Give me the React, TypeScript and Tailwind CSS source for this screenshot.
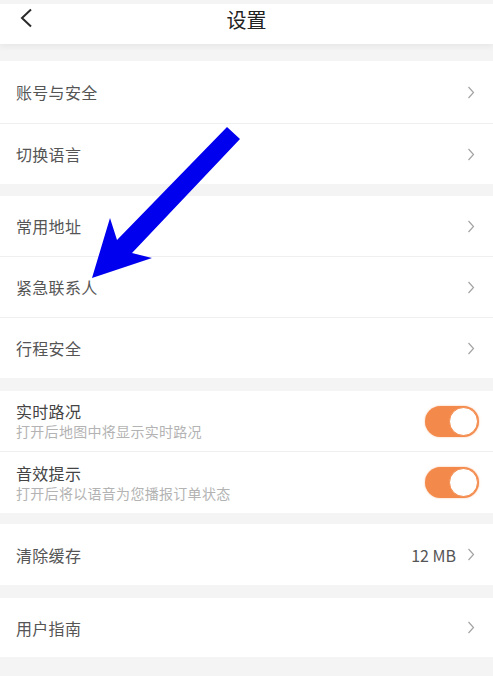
import React from "react";

const font = { fontFamily: '"Noto Sans CJK SC", "Noto Sans", sans-serif' };

function Chevron() {
  return (
    <svg width="8" height="13" viewBox="0 0 8 13" className="shrink-0">
      <path d="M1.5 1 L6.5 6.5 L1.5 12" fill="none" stroke="#a3a3a3" strokeWidth="1.2" />
    </svg>
  );
}

function Toggle() {
  return (
    <div className="w-[54px] h-[31px] rounded-full bg-[#f38a4b] flex items-center justify-end pr-[1px] shadow-[0_0_2px_rgba(243,138,75,0.6)]">
      <div className="w-[29px] h-[29px] rounded-full bg-white border-[1.5px] border-[#f38a4b]" />
    </div>
  );
}

function Row({ label, value, h, top }: { label: string; value?: string; h: string; top?: boolean }) {
  return (
    <div className={`flex items-center justify-between pl-4 pr-[18px] bg-white ${h} ${top ? "border-t border-[#efefef]" : ""}`}>
      <span className="text-[16px] text-[#555555] tracking-[0.3px]">{label}</span>
      <div className="flex items-center gap-[11px]">
        {value && <span className="text-[16px] text-[#555555]">{value}</span>}
        <Chevron />
      </div>
    </div>
  );
}

function SwitchRow({ label, sub, h, top }: { label: string; sub: string; h: string; top?: boolean }) {
  return (
    <div className={`flex items-center justify-between pl-4 pr-[14px] bg-white ${h} ${top ? "border-t border-[#efefef]" : ""}`}>
      <div className="flex flex-col">
        <span className="text-[16px] text-[#444444] leading-[21px] tracking-[0.3px]">{label}</span>
        <span className="text-[14px] text-[#b3b3b3] leading-[19px] tracking-[0.3px]">{sub}</span>
      </div>
      <Toggle />
    </div>
  );
}

export default function App() {
  return (
    <div className="relative w-full h-[676px] bg-[#f4f4f4] overflow-hidden pt-[4px]" style={font}>
      <div className="relative h-[40px] bg-white flex items-center justify-center pb-[9px] shadow-[0_3px_6px_rgba(0,0,0,0.05)]">
        <svg width="14" height="20" viewBox="0 0 14 20" className="absolute left-[19px] top-[4px]">
          <path d="M12 1.5 L3 10 L12 18.5" fill="none" stroke="#2a2a2a" strokeWidth="2" />
        </svg>
        <span className="text-[20px] text-[#222222] leading-[24px]">设置</span>
      </div>

      <div className="mt-[17px]">
        <Row label="账号与安全" h="h-[62px]" />
        <Row label="切换语言" h="h-[61px]" top />
      </div>

      <div className="mt-[12px]">
        <Row label="常用地址" h="h-[60px]" />
        <Row label="紧急联系人" h="h-[61px]" top />
        <Row label="行程安全" h="h-[61px]" top />
      </div>

      <div className="mt-[13px]">
        <SwitchRow label="实时路况" sub="打开后地图中将显示实时路况" h="h-[60px]" />
        <SwitchRow label="音效提示" sub="打开后将以语音为您播报订单状态" h="h-[62px]" top />
      </div>

      <div className="mt-[11px]">
        <Row label="清除缓存" value="12 MB" h="h-[61px]" />
      </div>

      <div className="mt-[13px]">
        <Row label="用户指南" h="h-[59px]" />
      </div>

      <svg className="absolute left-0 top-0 pointer-events-none" width="493" height="676" viewBox="0 0 493 676">
        <polygon
          points="92,278 110,218 117,240 227,127 240,139 132,253 152,258"
          fill="#0000ee"
        />
      </svg>
    </div>
  );
}
